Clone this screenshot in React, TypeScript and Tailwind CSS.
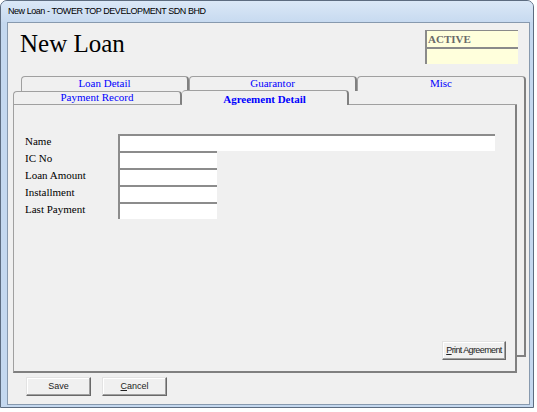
import React from 'react';

const serif = { fontFamily: '"Liberation Serif", "Times New Roman", serif' };
const sans = { fontFamily: '"Liberation Sans", Arial, sans-serif' };

const backTabs = ['Loan Detail', 'Guarantor', 'Misc'];

const fields = [
  { label: 'Name', width: 'w-[377px]' },
  { label: 'IC No', width: 'w-[99px]' },
  { label: 'Loan Amount', width: 'w-[99px]' },
  { label: 'Installment', width: 'w-[99px]' },
  { label: 'Last Payment', width: 'w-[99px]' },
];

const WinButton: React.FC<{ width: string; children: React.ReactNode }> = ({ width, children }) => (
  <button
    className={`${width} h-[19px] bg-[#f0f0f0] border border-t-[#e3e3e3] border-l-[#e3e3e3] border-r-[#696969] border-b-[#696969] shadow-[inset_-1px_-1px_0_#a0a0a0,inset_1px_1px_0_#ffffff] text-[9px] leading-none whitespace-nowrap text-[#222]`}
    style={sans}
  >
    {children}
  </button>
);

const App: React.FC = () => {
  return (
    <div className="w-[537px] h-[412px] bg-white">
      <div className="w-[534px] h-[408px] rounded-t-[7px] border border-[#5d6c80] bg-[#c4d8ef] flex flex-col">
        {/* title bar */}
        <div className="h-[21px] rounded-t-[6px] bg-gradient-to-b from-[#dbe8f7] to-[#c7daf0] pl-[7px] flex items-center">
          <span className="text-[9px] tracking-[-0.45px] text-black" style={sans}>
            New Loan - TOWER TOP DEVELOPMENT SDN BHD
          </span>
        </div>

        {/* client area */}
        <div className="ml-[6px] mr-[3px] h-[383px] border border-[#8799ae] bg-[#f0f0f0] flex flex-col" style={serif}>
          <div className="h-[53px] flex justify-between items-start">
            <h1 className="ml-[12px] mt-[8px] text-[25px] leading-none text-black">New Loan</h1>
            <div className="mt-[7px] mr-[11px] w-[93px] bg-[#ffffdc]">
              <div className="h-[17px] border-t border-l-2 border-[#8a8a8a] pl-[1px] text-[11px] font-bold leading-[16px] text-[#6a6a6a]">ACTIVE</div>
              <div className="h-[17px] border-t-2 border-l-2 border-[#8a8a8a]"></div>
            </div>
          </div>

          {/* tabs */}
          <div className="pl-[5px]">
            <div className="ml-[8px] flex h-[14px]">
              {backTabs.map((t, i) => (
                <div
                  key={t}
                  className={`${i === 2 ? 'w-[169px]' : 'w-[168px]'} h-[15px] rounded-t-[4px] border-t border-l border-r-2 border-t-[#a0a0a0] border-l-[#a0a0a0] border-r-[#808080] text-center text-[11px] leading-[13px] text-[#0000ff]`}
                >
                  {t}
                </div>
              ))}
            </div>
            <div className="flex">
              <div className="w-[504px] flex flex-col">
                <div className="flex items-end h-[15px]">
                  <div className="w-[169px] h-[14px] rounded-t-[4px] border-t border-l border-b border-r-2 border-t-[#a0a0a0] border-l-[#a0a0a0] border-b-[#a0a0a0] border-r-[#808080] bg-[#f0f0f0] text-center text-[11px] leading-[11px] text-[#0000ff]">
                    Payment Record
                  </div>
                  <div className="w-[167px] h-[15px] rounded-t-[4px] border-t border-r-2 border-t-[#a0a0a0] border-r-[#808080] bg-[#f0f0f0] text-center text-[11px] font-bold leading-[16px] text-[#0000ff]">
                    Agreement Detail
                  </div>
                  <div className="flex-1 h-px border-b border-[#a0a0a0]"></div>
                </div>
                <div className="h-[268px] border-l border-r-2 border-b-2 border-l-[#a0a0a0] border-r-[#808080] border-b-[#808080] flex flex-col pt-[29px] pl-[11px] pr-[9px] pb-[11px]">
                  {fields.map(f => (
                    <div key={f.label} className="flex items-start h-[17px]">
                      <span className="w-[93px] pt-[2px] text-[11px] text-black leading-none">{f.label}</span>
                      <div className={`${f.width} h-[17px] bg-white border-t-2 border-l-2 border-[#8c8c8c]`}></div>
                    </div>
                  ))}
                  <div className="mt-auto flex justify-end">
                    <WinButton width="w-[64px] tracking-[-0.6px]">
                      <span className="underline">P</span>rint Agreement
                    </WinButton>
                  </div>
                </div>
              </div>
              <div className="w-[9px] h-[267px] border-r-2 border-b-2 border-[#808080]"></div>
            </div>
          </div>

          <div className="mt-[4px] pl-[18px] flex gap-[11px]">
            <WinButton width="w-[65px]">Save</WinButton>
            <WinButton width="w-[65px]">
              <span className="underline">C</span>ancel
            </WinButton>
          </div>
        </div>
      </div>
    </div>
  );
};

export default App;
